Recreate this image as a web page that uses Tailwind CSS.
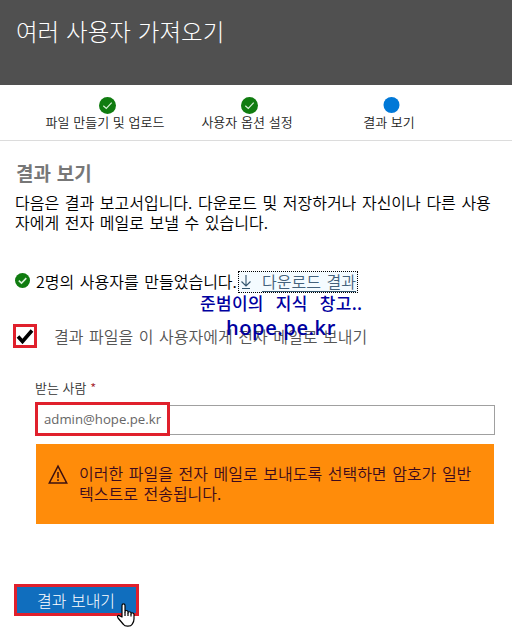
<!DOCTYPE html>
<html lang="ko">

<head>
    <meta charset="UTF-8">
    <meta name="viewport" content="width=device-width, initial-scale=1.0">
    <title>여러 사용자 가져오기</title>
    <script src="https://cdn.jsdelivr.net/npm/@tailwindcss/browser@4"></script>
</head>

<body class="relative w-[512px] h-[631px] overflow-hidden bg-white text-black font-[350] font-['Noto_Sans_CJK_KR',sans-serif] text-[16px] leading-[20px] [word-spacing:1.1px] whitespace-nowrap">
    <!-- Header -->
    <header class="h-[85px] bg-[#505050] pl-[16px] pt-[15px]">
        <h1 class="text-[23.5px] leading-[32px] font-light text-white [word-spacing:0.3px]">여러 사용자 가져오기</h1>
    </header>

    <!-- Wizard steps -->
    <nav class="flex h-[56px] border-b border-[#dcdcdc] pt-[12px] pl-[45px] text-[13px] leading-[14px] text-[#222] [word-spacing:0.1px]">
        <div class="flex w-[125px] flex-col items-center gap-[1px]">
            <svg class="h-[17px] w-[17px]" viewBox="0 0 17 17" fill="none">
                <circle cx="8.5" cy="8.5" r="8.5" fill="#107c10" />
                <path d="M4.3 8.7l3 2.8 5.4-5.8" stroke="#d8f0d8" stroke-width="1.2" />
            </svg>
            <span class="-ml-[5px]">파일 만들기 및 업로드</span>
        </div>
        <div class="ml-[31px] flex w-[97px] flex-col items-center gap-[1px]">
            <svg class="-ml-[1px] h-[17px] w-[17px]" viewBox="0 0 17 17" fill="none">
                <circle cx="8.5" cy="8.5" r="8.5" fill="#107c10" />
                <path d="M4.3 8.7l3 2.8 5.4-5.8" stroke="#d8f0d8" stroke-width="1.2" />
            </svg>
            <span class="-ml-[5px]">사용자 옵션 설정</span>
        </div>
        <div class="ml-[65px] flex w-[56px] flex-col items-center gap-[1px]">
            <svg class="h-[17px] w-[17px]" viewBox="0 0 17 17">
                <circle cx="8.5" cy="8" r="8" fill="#0078d7" />
            </svg>
            <span class="-ml-[4px]">결과 보기</span>
        </div>
    </nav>

    <main class="px-[15px] pt-[19px]">
        <h2 class="h-[32px] pl-[1px] text-[19px] leading-[26px] font-bold text-[#777] [word-spacing:0.5px]">결과 보기</h2>
        <p>다음은 결과 보고서입니다. 다운로드 및 저장하거나 자신이나 다른 사용<br>자에게 전자 메일로 보낼 수 있습니다.</p>

        <!-- Result line -->
        <div class="mt-[39px] flex h-[22px] items-center">
            <svg class="h-[15px] w-[15px] -mt-[4px]" viewBox="0 0 15 15" fill="none">
                <circle cx="7.5" cy="7.5" r="7.5" fill="#107c10" />
                <path d="M3.8 7.6l2.7 2.5 4.8-5" stroke="#d8f0d8" stroke-width="1.6" />
            </svg>
            <span class="-mt-[2px] ml-[6px] w-[202px]">2명의 사용자를 만들었습니다.</span>
            <a href="#" class="flex h-[22px] w-[120px] items-center border border-dotted border-black bg-[#f4fbff] text-[#44627c]">
                <svg class="ml-[1px] h-[16px] w-[12px]" viewBox="0 0 12 16" fill="none" stroke="#34566e" stroke-width="1.1">
                    <path d="M6 1v11M1.5 7.5L6 12l4.5-4.5M2 14.5h8" />
                </svg>
                <span class="ml-[10px] h-[20px] border-b border-[#34566e] leading-[18px]">다운로드 결과</span>
            </a>
        </div>

        <!-- Mail checkbox -->
        <div class="-ml-[2px] mt-[31px] flex h-[24px] items-center">
            <span class="flex h-[24px] w-[24px] items-center justify-center border-[3px] border-[#e0202c] bg-white">
                <svg class="h-[18px] w-[18px]" viewBox="0 0 18 18" fill="none">
                    <path d="M2 9.5l4.5 5L16 3.5" stroke="#000" stroke-width="3.6" />
                </svg>
            </span>
            <span class="ml-[17px] text-[#555]">결과 파일을 이 사용자에게 전자 메일로 보내기</span>
        </div>

        <!-- Recipient -->
        <div class="ml-[20px] mt-[32px] w-[460px]">
            <label for="to" class="block h-[25px] text-[13px] leading-[16px] text-[#333] [word-spacing:0px]">받는 사람 <span class="text-[#a4262c]">*</span></label>
            <div class="relative h-[30px] border border-[#a0a0a0]">
                <div id="to" class="absolute -left-[1px] -top-[4px] flex h-[34px] w-[135px] items-center border-[3px] border-[#e0202c] bg-white pl-[6px] pb-[1px] font-['Open_Sans',sans-serif] text-[13.2px] font-normal text-[#666]">admin@hope.pe.kr</div>
            </div>
        </div>

        <!-- Warning -->
        <div class="ml-[21px] mt-[9px] flex h-[80px] w-[458px] bg-[#ff8c0a] text-[#3c0a1e]">
            <svg class="ml-[12px] mt-[20px] h-[21px] w-[20px]" viewBox="0 0 20 21" fill="none" stroke="#3c1010" stroke-width="1.5">
                <path d="M10 2.2L18.7 19H1.3z" />
                <path d="M10 8v6M10 15.3v1.7" />
            </svg>
            <p class="ml-[11px] mt-[19px]">이러한 파일을 전자 메일로 보내도록 선택하면 암호가 일반<br>텍스트로 전송됩니다.</p>
        </div>

        <button class="-ml-[1px] mt-[60px] block h-[32px] w-[125px] border-[3px] border-[#e0202c] bg-[#106ebe] pl-[20px] text-left leading-[24px] font-light text-white">결과 보내기</button>
    </main>

    <!-- Handwritten watermark -->
    <div class="absolute left-[200px] top-[293px] text-[17px] leading-[20px] font-medium tracking-[0.3px] text-[#0000a0] [word-spacing:7px]">준범이의 지식 창고..</div>
    <div class="absolute left-[226px] top-[315px] font-['Open_Sans',sans-serif] text-[20px] leading-[26px] font-semibold tracking-[0.6px] text-[#0000a0]">hope.pe.kr</div>

    <!-- Hand cursor -->
    <svg class="absolute left-[116px] top-[603px] h-[25px] w-[20px]" viewBox="0 0 20 25" fill="#fff" stroke="#000" stroke-width="1.2" stroke-linejoin="round">
        <path d="M6 14V2.500C6 .3 9 .3 9 2.500V9c0-2 3-2 3 0v1c0-1.700 3-1.700 3 0v1c0-1.600 3-1.600 3 .5V16c0 3-1 4-2 5.500-1 2-7 2.500-8.500 0L2 15c-1.500-2.200.5-3.200 2-2z" />
        <path d="M9 9v4M12 10v3M15 11v2.5" />
    </svg>
</body>

</html>
